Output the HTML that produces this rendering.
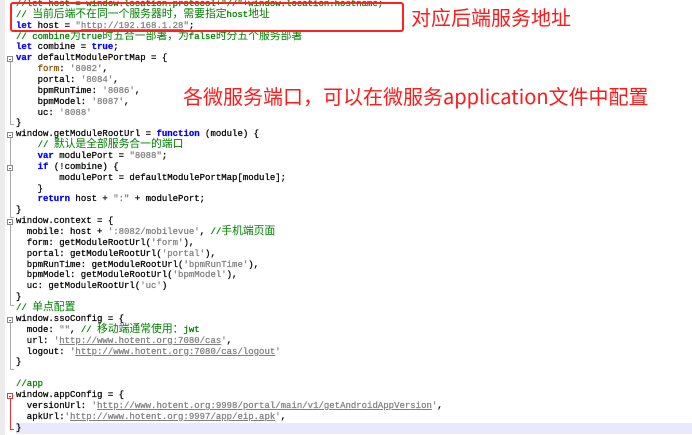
<!DOCTYPE html>
<html><head><meta charset="utf-8"><style>
body{margin:0;width:692px;height:435px;background:#fff;overflow:hidden;position:relative;font-family:"Liberation Mono","Noto Sans CJK SC",monospace;}
.g{position:absolute;left:0;top:0;width:5px;height:435px;background:#ececec;}
.code{position:absolute;left:16px;top:-1px;font-size:9px;line-height:10.87px;color:#000;-webkit-text-stroke:0.25px;}
.code div{height:10.87px;white-space:pre;overflow:visible;}
.z{font-size:10.8px;line-height:0;font-family:"Noto Sans CJK SC",sans-serif;-webkit-text-stroke:0;}
.k{color:#0000ff;font-weight:bold}
.c{color:#008000}
.s{color:#808080}
.u{color:#808080;text-decoration:underline}
.f{color:#8a4a00}
.hl{position:absolute;left:16px;right:0;top:423px;height:11px;background:#e8e8ff;}
.fold{position:absolute;left:7px;width:6px;height:6px;border:1px solid #888;background:#fff;box-sizing:border-box;}
.fold:after{content:"";position:absolute;left:1px;top:2px;width:2px;height:1px;background:#666}
.vl{position:absolute;left:10px;width:1px;background:#aaa;}
.end{position:absolute;left:10px;width:4px;height:1px;background:#aaa;}
.red{color:#ff1a1a;font-family:"Noto Sans CJK SC",sans-serif;font-size:20px;position:absolute;white-space:nowrap;line-height:1;}
.box{position:absolute;left:10px;top:2px;width:394px;height:30px;border:2px solid #ff2020;border-radius:3px;box-sizing:border-box;}
</style></head><body>
<div class="g"></div>
<div class="hl"></div>
<div class="fold" style="top:56px"></div><div class="vl" style="top:62px;height:62px"></div><div class="end" style="top:124px"></div>
<div class="fold" style="top:132px"></div><div class="vl" style="top:138px;height:79px"></div><div class="end" style="top:217px"></div>
<div class="fold" style="top:165px"></div><div class="vl" style="top:171px;height:20px"></div>
<div class="fold" style="top:219px"></div><div class="vl" style="top:225px;height:80px"></div><div class="end" style="top:305px"></div>
<div class="fold" style="top:317px"></div><div class="vl" style="top:323px;height:46px"></div><div class="end" style="top:369px"></div>
<div class="fold" style="top:393px;border-color:#e33"></div><div class="vl" style="top:399px;height:30px;background:#e33"></div><div class="end" style="top:429px;background:#e33"></div>
<div class="code"><div class="c">//let host = window.location.protocol+"//"+window.location.hostname;</div><div class="c">// <span class="z">当前后端不在同一个服务器时，需要指定</span>host<span class="z">地址</span></div><div><span class="k">let</span> host = <span class="s">"<span class="u">http://192.168.1.28</span>"</span>;</div><div class="c">// combine<span class="z">为</span>true<span class="z">时五合一部署，为</span>false<span class="z">时分五个服务部署</span></div><div><span class="k">let</span> combine = <span class="k">true</span>;</div><div><span class="k">var</span> defaultModulePortMap = {</div><div>    <span class="f">form</span>: <span class="s">'8082'</span>,</div><div>    portal: <span class="s">'8084'</span>,</div><div>    bpmRunTime: <span class="s">'8086'</span>,</div><div>    bpmModel: <span class="s">'8087'</span>,</div><div>    uc: <span class="s">'8088'</span></div><div>}</div><div>window.getModuleRootUrl = <span class="k">function</span> (module) {</div><div>    <span class="c">// <span class="z">默认是全部服务合一的端口</span></span></div><div>    <span class="k">var</span> modulePort = <span class="s">"8088"</span>;</div><div>    <span class="k">if</span> (!combine) {</div><div>        modulePort = defaultModulePortMap[module];</div><div>    }</div><div>    <span class="k">return</span> host + <span class="s">":"</span> + modulePort;</div><div>}</div><div>window.context = {</div><div>  mobile: host + <span class="s">':8082/mobilevue'</span>, <span class="c">//<span class="z">手机端页面</span></span></div><div>  form: getModuleRootUrl(<span class="s">'form'</span>),</div><div>  portal: getModuleRootUrl(<span class="s">'portal'</span>),</div><div>  bpmRunTime: getModuleRootUrl(<span class="s">'bpmRunTime'</span>),</div><div>  bpmModel: getModuleRootUrl(<span class="s">'bpmModel'</span>),</div><div>  uc: getModuleRootUrl(<span class="s">'uc'</span>)</div><div>}</div><div class="c">// <span class="z">单点配置</span></div><div>window.ssoConfig = {</div><div>  mode: <span class="s">""</span>, <span class="c">// <span class="z">移动端通常使用：</span>jwt</span></div><div>  url: <span class="s">'<span class="u">http://www.hotent.org:7080/cas</span>'</span>,</div><div>  logout: <span class="s">'<span class="u">http://www.hotent.org:7080/cas/logout</span>'</span></div><div>}</div><div> </div><div class="c">//app</div><div>window.appConfig = {</div><div>  versionUrl: <span class="s">'<span class="u">http://www.hotent.org:9998/portal/main/v1/getAndroidAppVersion</span>'</span>,</div><div>  apkUrl:<span class="s">'<span class="u">http://www.hotent.org:9997/app/eip.apk</span>'</span>,</div><div>}</div></div>
<div class="box"></div>
<div class="red" style="left:411px;top:7px">对应后端服务地址</div>
<div class="red" style="left:183px;top:86px">各微服务端口，可以在微服务application文件中配置</div>
</body></html>
